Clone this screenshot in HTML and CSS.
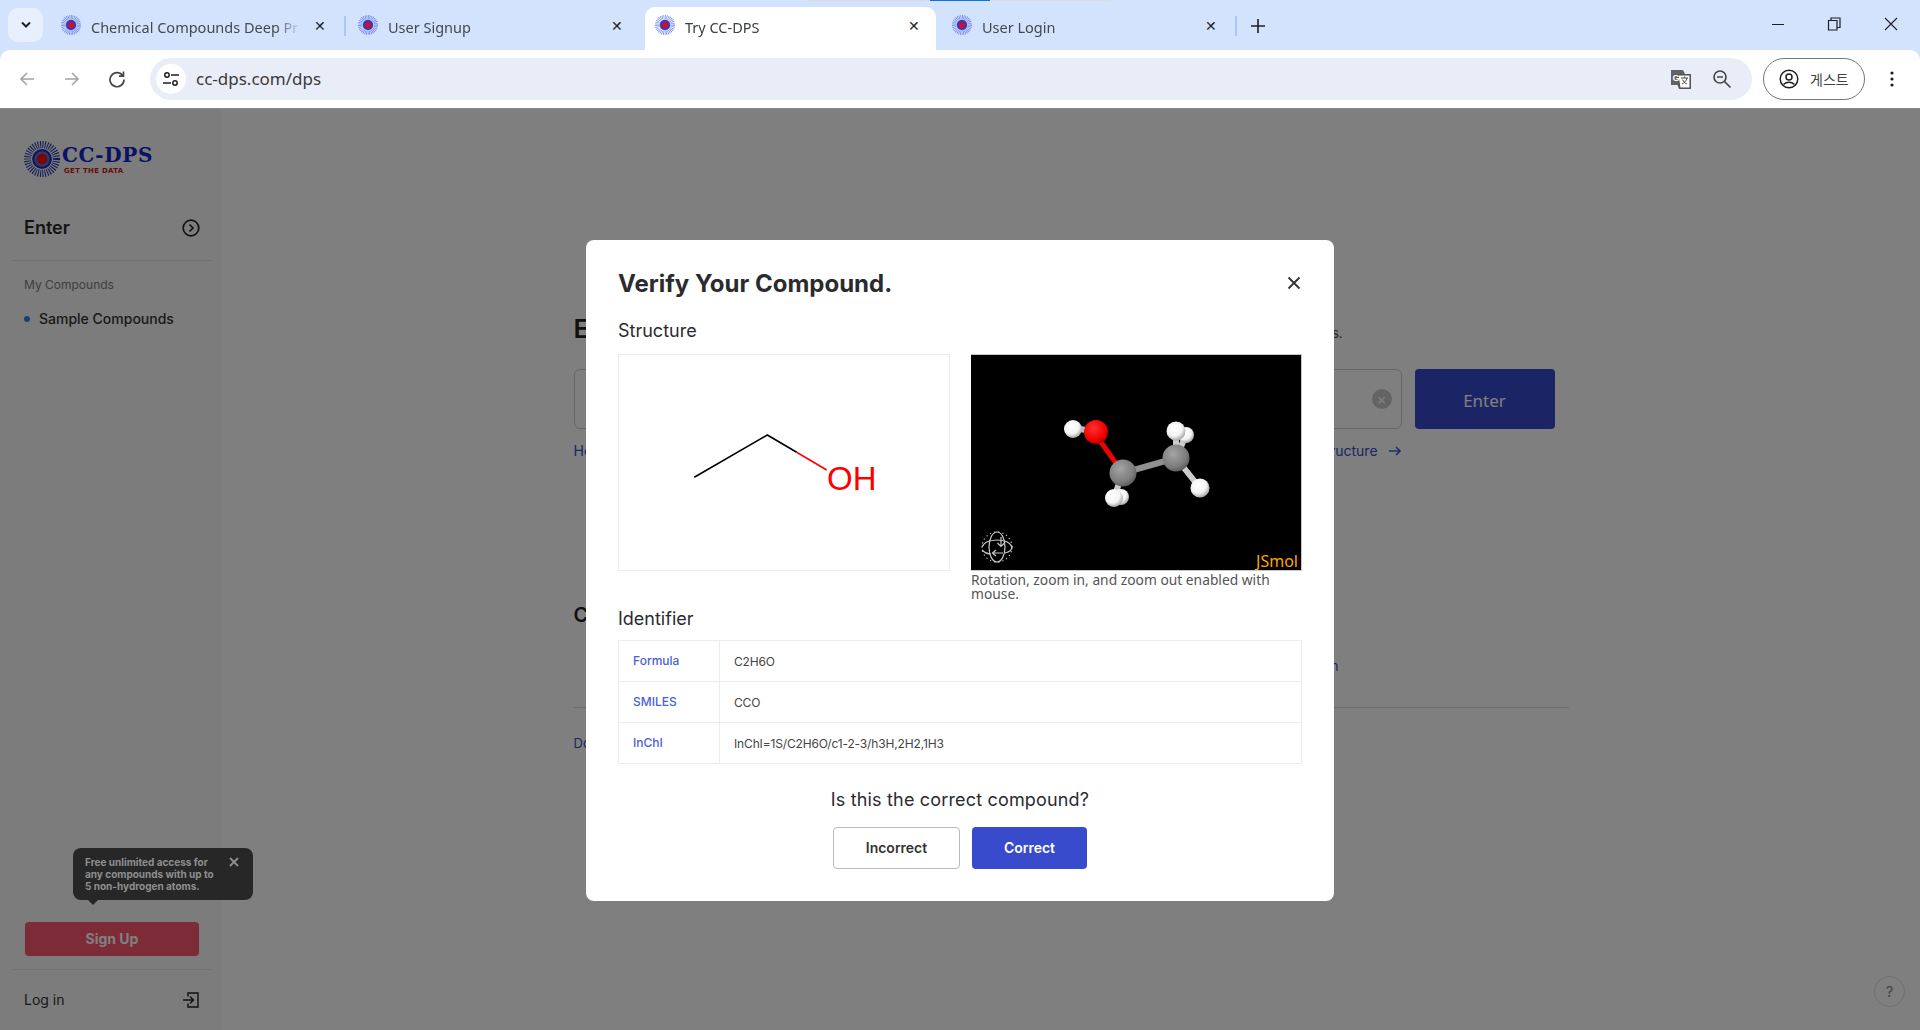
FILE: index.html
```html
<!DOCTYPE html>
<html lang="en">
<head>
    <meta charset="UTF-8">
    <meta name="viewport" content="width=device-width, initial-scale=1.0">
    <title>Try CC-DPS</title>
    <link rel="stylesheet" href="styles.css">
</head>
<body>
    <svg class="defs" width="0" height="0">
        <defs>
            <symbol id="sun" viewBox="0 0 40 40">
                <circle cx="20" cy="20" r="16" fill="none" stroke="#6f80e8" stroke-width="8" stroke-dasharray="1.400 1.600"/>
                <circle cx="20" cy="20" r="11.500" fill="#8d9bec"/>
                <circle cx="20" cy="20" r="10" fill="#2a3ab8"/>
                <circle cx="20" cy="20" r="6.500" fill="#c4103a"/>
            </symbol>
            <radialGradient id="white" cx="40%" cy="35%" r="70%">
                <stop offset="0" stop-color="#fff"/><stop offset=".6" stop-color="#f4f4f4"/><stop offset="1" stop-color="#9a9a9a"/>
            </radialGradient>
            <radialGradient id="grey" cx="40%" cy="35%" r="70%">
                <stop offset="0" stop-color="#a4a4a4"/><stop offset=".7" stop-color="#7c7c7c"/><stop offset="1" stop-color="#555"/>
            </radialGradient>
            <radialGradient id="red" cx="40%" cy="35%" r="70%">
                <stop offset="0" stop-color="#ff3030"/><stop offset=".7" stop-color="#f00000"/><stop offset="1" stop-color="#a00000"/>
            </radialGradient>
        </defs>
    </svg>

    <div class="browser">
        <div class="share-bar"><span class="share-on"></span></div>
        <div class="tabstrip">
            <button class="tab-list">
                <svg width="12" height="8" viewBox="0 0 12 8"><path d="M2 1.500l4 4 4-4" fill="none" stroke="#1f1f1f" stroke-width="2"/></svg>
            </button>
            <div class="tab">
                <svg class="favicon"><use href="#sun"/></svg>
                <span class="tab-title">Chemical Compounds Deep Pr</span>
                <span class="tab-x">✕</span>
            </div>
            <i class="tab-sep"></i>
            <div class="tab">
                <svg class="favicon"><use href="#sun"/></svg>
                <span class="tab-title">User Signup</span>
                <span class="tab-x">✕</span>
            </div>
            <i class="tab-sep hidden"></i>
            <div class="tab active">
                <svg class="favicon"><use href="#sun"/></svg>
                <span class="tab-title">Try CC-DPS</span>
                <span class="tab-x">✕</span>
            </div>
            <i class="tab-sep hidden"></i>
            <div class="tab">
                <svg class="favicon"><use href="#sun"/></svg>
                <span class="tab-title">User Login</span>
                <span class="tab-x">✕</span>
            </div>
            <i class="tab-sep"></i>
            <svg class="new-tab" width="14" height="14" viewBox="0 0 14 14"><path d="M7 0v14M0 7h14" stroke="#1f1f1f" stroke-width="1.600"/></svg>
            <div class="window-btns">
                <svg width="12" height="12" viewBox="0 0 12 12"><path d="M0 6.500h12" stroke="#1f1f1f"/></svg>
                <svg width="14" height="14" viewBox="0 0 14 14"><path d="M4 3V1h9v9.500h-3M1.500 3.500h8.500v9.500H1.500z" fill="none" stroke="#1f1f1f" stroke-width="1.200"/></svg>
                <svg width="14" height="14" viewBox="0 0 14 14"><path d="M1 1l12 12M13 1L1 13" stroke="#1f1f1f" stroke-width="1.100"/></svg>
            </div>
        </div>
        <div class="toolbar">
            <svg class="nav-btn" width="18" height="18" viewBox="0 0 18 18"><path d="M16 9H3M9 3L3 9l6 6" fill="none" stroke="#a3a5a8" stroke-width="1.600"/></svg>
            <svg class="nav-btn" width="18" height="18" viewBox="0 0 18 18"><path d="M2 9h13M9 3l6 6-6 6" fill="none" stroke="#a3a5a8" stroke-width="1.600"/></svg>
            <svg class="nav-btn" width="18" height="18" viewBox="0 0 18 18"><path d="M14.600 5.500A7 7 0 1 0 16 9.500M15.500 1.500v4.600h-4.600" fill="none" stroke="#474747" stroke-width="1.700"/></svg>
            <div class="omnibox">
                <span class="site-info">
                    <svg width="16" height="16" viewBox="0 0 16 16"><circle cx="4" cy="4" r="2.200" fill="none" stroke="#1f1f1f" stroke-width="1.500"/><circle cx="12" cy="12" r="2.200" fill="none" stroke="#1f1f1f" stroke-width="1.500"/><path d="M8 4h8M0 12h8" stroke="#1f1f1f" stroke-width="1.500"/></svg>
                </span>
                <span class="url">cc-dps.com/dps</span>
                <svg class="omni-icon" width="22" height="22" viewBox="0 0 22 22"><path d="M1 2h12l2 4h6v15H9l-1.500-4H1z" fill="#5f6368"/><path d="M8 7h12v13H10z" fill="#fff" stroke="#474747"/><text x="2.500" y="13" class="g-letter">G</text><path d="M11 10h7M14.500 8.500V10M17 10c-.5 3-3 5-5 6M12.500 11.500c.8 2 2.600 3.700 4.500 4.500" fill="none" stroke="#474747"/></svg>
                <svg class="omni-icon" width="20" height="20" viewBox="0 0 20 20"><circle cx="8" cy="8" r="6" fill="none" stroke="#474747" stroke-width="1.700"/><path d="M12.500 12.500L18.500 18.500" stroke="#474747" stroke-width="1.700"/><path d="M5 8h6" stroke="#474747" stroke-width="1.500"/></svg>
            </div>
            <div class="profile">
                <svg width="20" height="20" viewBox="0 0 20 20"><circle cx="10" cy="10" r="8.800" fill="none" stroke="#1f1f1f" stroke-width="1.500"/><circle cx="10" cy="8" r="3" fill="none" stroke="#1f1f1f" stroke-width="1.500"/><path d="M4.500 15.500c3-3 8-3 11 0" fill="none" stroke="#1f1f1f" stroke-width="1.500"/></svg>
                <span>게스트</span>
            </div>
            <svg class="kebab" width="4" height="16" viewBox="0 0 4 16"><circle cx="2" cy="2" r="1.600" fill="#1f1f1f"/><circle cx="2" cy="8" r="1.600" fill="#1f1f1f"/><circle cx="2" cy="14" r="1.600" fill="#1f1f1f"/></svg>
        </div>
    </div>

    <div class="page">
        <aside class="sidebar">
            <div class="logo">
                <svg class="logo-mark" viewBox="0 0 40 40">
                    <circle cx="20" cy="20" r="16" fill="none" stroke="#1c2fb0" stroke-width="8" stroke-dasharray="1.100 1.500"/>
                    <circle cx="20" cy="20" r="11" fill="#1c2fb0"/>
                    <circle cx="20" cy="20" r="8.500" fill="#6070e0"/>
                    <circle cx="20" cy="20" r="6" fill="#ee1010"/>
                </svg>
                <div class="logo-text">
                    <span class="logo-name">CC-DPS</span>
                    <span class="logo-tag">GET THE DATA</span>
                </div>
            </div>
            <div class="side-row enter-row">
                <span>Enter</span>
                <svg width="18" height="18" viewBox="0 0 18 18"><circle cx="9" cy="9" r="7.800" fill="none" stroke="#222" stroke-width="1.700"/><path d="M7.500 5.500L11 9l-3.500 3.500" fill="none" stroke="#222" stroke-width="1.700"/></svg>
            </div>
            <div class="side-section">
                <div class="side-label">My Compounds</div>
                <div class="side-item">Sample Compounds</div>
            </div>
            <div class="side-foot">
                <button class="signup">Sign Up</button>
                <div class="side-row login-row">
                    <span>Log in</span>
                    <svg width="16" height="16" viewBox="0 0 16 16"><path d="M5 4.500V1h10v14H5v-3.500M0 8h10.500M7 4.500L10.500 8 7 11.500" fill="none" stroke="#222" stroke-width="1.400"/></svg>
                </div>
            </div>
        </aside>

        <main class="main">
            <div class="main-inner">
                <div class="search-head">
                    <h2>Enter Compound</h2>
                    <span class="note">Search by name, SMILES or InChI of the compounds.</span>
                </div>
                <div class="search-row">
                    <div class="search-input">
                        <span class="clear-btn">×</span>
                    </div>
                    <button class="enter-btn">Enter</button>
                </div>
                <div class="search-links">
                    <a>How to enter a compound</a>
                    <a class="arrow-link">Draw structure
                        <svg width="12" height="10" viewBox="0 0 12 10"><path d="M0 5h11M7 1l4 4-4 4" fill="none" stroke="#4a5ad8" stroke-width="1.600"/></svg>
                    </a>
                </div>
                <div class="sample-head">
                    <h2>Compounds</h2>
                </div>
                <div class="sample-row"><a>View sample compound selection</a></div>
                <hr class="main-rule">
                <a class="doc-link">Docs</a>
            </div>
        </main>

        <div class="overlay"></div>

        <div class="tooltip">
            <p>Free unlimited access for any compounds with up to 5 non-hydrogen atoms.</p>
            <svg width="10" height="10" viewBox="0 0 10 10"><path d="M1 1l8 8M9 1L1 9" stroke="#8f8f8f" stroke-width="1.800"/></svg>
        </div>

        <div class="help">?</div>

        <section class="modal">
            <div class="modal-head">
                <h1>Verify Your Compound.</h1>
                <svg width="14" height="14" viewBox="0 0 14 14"><path d="M1.500 1.500l11 11M12.500 1.500l-11 11" stroke="#333" stroke-width="1.800"/></svg>
            </div>
            <h3>Structure</h3>
            <div class="structure">
                <div class="panel-2d">
                    <svg width="330" height="215" viewBox="0 0 330 215">
                        <path d="M75.300 122.300L148.300 80L177.700 97.300" fill="none" stroke="#000" stroke-width="1.600"/>
                        <path d="M177.700 97.300L207.700 115" fill="none" stroke="#f00" stroke-width="1.600"/>
                        <text x="208" y="135" class="oh">OH</text>
                    </svg>
                </div>
                <div class="panel-3d">
                    <div class="jsmol">
                        <svg width="330" height="216" viewBox="0 0 330 216">
                            <path d="M122 76L102 73" stroke="#bbb" stroke-width="6"/>
                            <path d="M122 76L152 118" stroke="#e00" stroke-width="5"/>
                            <path d="M152 118L205 103" stroke="#909090" stroke-width="6"/>
                            <path d="M152 118L143 142M205 103L205 76M205 103L229 133M205 103L215 80" stroke="#ccc" stroke-width="6"/>
                            <circle cx="215" cy="80" r="8" fill="url(#white)"/>
                            <circle cx="205" cy="76" r="9.500" fill="url(#white)"/>
                            <circle cx="205" cy="103" r="13.500" fill="url(#grey)"/>
                            <circle cx="229" cy="133" r="9.500" fill="url(#white)"/>
                            <circle cx="150" cy="142" r="8" fill="url(#white)"/>
                            <circle cx="143" cy="143" r="9" fill="url(#white)"/>
                            <circle cx="152" cy="118" r="13.500" fill="url(#grey)"/>
                            <circle cx="125" cy="77" r="12" fill="url(#red)"/>
                            <circle cx="102" cy="74" r="9" fill="url(#white)"/>
                            <g fill="none" stroke="#c8c8c8" stroke-width="1.200">
                                <circle cx="26" cy="192" r="15" stroke-dasharray="1.200 3"/>
                                <ellipse cx="26" cy="192" rx="8" ry="15"/>
                                <path d="M11 192c2-5 9-7 15-7s13 2 15 7c0 3-3 5-7 6M20 199c-4 0-7-2-9-4"/>
                                <path d="M30 182v9M26.500 188l3.500 3.500 3.500-3.500M32 198h-10M25 195l-3.500 3 3.500 3"/>
                            </g>
                        </svg>
                        <span class="jsmol-mark">JSmol</span>
                    </div>
                    <p class="caption">Rotation, zoom in, and zoom out enabled with mouse.</p>
                </div>
            </div>
            <h3 class="id-title">Identifier</h3>
            <div class="id-table">
                <div class="id-row"><span class="id-key">Formula</span><span class="id-val">C2H6O</span></div>
                <div class="id-row"><span class="id-key">SMILES</span><span class="id-val">CCO</span></div>
                <div class="id-row"><span class="id-key">InChI</span><span class="id-val">InChI=1S/C2H6O/c1-2-3/h3H,2H2,1H3</span></div>
            </div>
            <p class="question">Is this the correct compound?</p>
            <div class="actions">
                <button class="btn-outline">Incorrect</button>
                <button class="btn-primary">Correct</button>
            </div>
        </section>
    </div>
</body>
</html>
```

FILE: styles.css
```css
* {
    box-sizing: border-box;
}

html, body {
    height: 100%;
    margin: 0;
}

body {
    font-family: Inter, "Noto Sans CJK KR", sans-serif;
    display: flex;
    flex-direction: column;
    overflow: hidden;
    background: #fff;
}

button {
    font-family: inherit;
}

.defs {
    position: absolute;
}

/* browser chrome */
.browser {
    position: relative;
    background: #d3e3fd;
    flex: none;
}

.share-bar {
    position: absolute;
    top: 0;
    left: 808px;
    width: 302px;
    height: 1px;
    background: #dcdcdc;
}

.share-on {
    display: block;
    margin-left: 122px;
    width: 60px;
    height: 1px;
    background: #0a74da;
}

.tabstrip {
    height: 50px;
    display: flex;
    align-items: flex-end;
    padding-left: 8px;
}

.tab-list {
    width: 35px;
    height: 34px;
    margin: 0 8px 8px 0;
    border: none;
    border-radius: 10px;
    background: #e8f0fe;
    display: flex;
    align-items: center;
    justify-content: center;
    padding: 0;
}

.tab {
    width: 291px;
    height: 43px;
    display: flex;
    align-items: center;
    padding: 0 16px 7px 10px;
    border-radius: 10px 10px 0 0;
    font-family: "Noto Sans", "Open Sans", sans-serif;
    font-size: 14.500px;
    color: #45494e;
}

.tab.active {
    background: #fff;
    color: #3c4043;
}

.favicon {
    width: 20px;
    height: 20px;
    margin-right: 10px;
    flex: none;
}

.tab-title {
    flex: 1;
    margin-top: 4px;
    overflow: hidden;
    white-space: nowrap;
    -webkit-mask-image: linear-gradient(to right, #000 88%, transparent);
    mask-image: linear-gradient(to right, #000 88%, transparent);
}

.tab-x {
    font-size: 14px;
    color: #1f1f1f;
    margin-left: 13px;
}

.tab-sep {
    width: 2px;
    height: 20px;
    margin: 0 2px 14px;
    background: #a8c7fa;
}

.tab-sep.hidden {
    visibility: hidden;
}

.new-tab {
    margin: 0 0 17px 12px;
}

.window-btns {
    margin: 0 0 19px auto;
    display: flex;
    align-items: center;
    gap: 43px;
    padding-right: 22px;
}

.toolbar {
    height: 59px;
    background: #fff;
    border-radius: 10px 10px 0 0;
    border-bottom: 1px solid #8a8a8a;
    display: flex;
    align-items: center;
    padding: 0 0 1px 18px;
}

.nav-btn {
    margin-right: 27px;
    flex: none;
}

.omnibox {
    width: 1602px;
    height: 42px;
    margin-left: -3px;
    border-radius: 21px;
    background: #e9edf8;
    display: flex;
    align-items: center;
    padding-left: 6px;
}

.site-info {
    width: 30px;
    height: 30px;
    border-radius: 50%;
    background: #fff;
    display: flex;
    align-items: center;
    justify-content: center;
}

.url {
    flex: 1;
    font-family: "Noto Sans", "Open Sans", sans-serif;
    font-size: 17px;
    color: #3a3a3a;
    margin-left: 10px;
}

.omni-icon {
    margin-right: 20px;
}

.g-letter {
    font-family: "Liberation Sans", sans-serif;
    font-weight: 700;
    font-size: 9px;
    fill: #fff;
}

.profile {
    width: 102px;
    height: 42px;
    margin-left: 11px;
    border: 1px solid #747775;
    border-radius: 21px;
    display: flex;
    align-items: center;
    gap: 11px;
    padding-left: 15px;
    font-family: "Noto Sans CJK KR", sans-serif;
    font-size: 14px;
    color: #444;
}

.kebab {
    margin-left: 25px;
}

/* page under the dialog */
.page {
    position: relative;
    flex: 1;
    display: flex;
    min-height: 0;
}

.sidebar {
    width: 222px;
    flex: none;
    background: #f8f8f8;
    padding: 0 10px 0 12px;
    display: flex;
    flex-direction: column;
}

.logo {
    height: 43px;
    margin: 28px 0 0 12px;
    display: flex;
    align-items: center;
    gap: 2px;
}

.logo-mark {
    width: 36px;
    height: 42px;
    flex: none;
}

.logo-text {
    display: flex;
    flex-direction: column;
}

.logo-name {
    font-family: "DejaVu Serif", "Liberation Serif", serif;
    font-weight: 700;
    font-size: 20px;
    line-height: 24px;
    color: #1224c8;
    letter-spacing: .7px;
}

.logo-tag {
    font-family: "DejaVu Sans", sans-serif;
    font-weight: 700;
    font-size: 7px;
    line-height: 8px;
    letter-spacing: .3px;
    color: #d01616;
    margin-left: 2px;
}

.side-row {
    display: flex;
    align-items: center;
    justify-content: space-between;
    padding: 0 12px;
}

.enter-row {
    height: 52px;
    margin-top: 29px;
    padding-bottom: 14px;
    font-size: 18px;
    font-weight: 600;
    color: #2a2a2a;
    border-bottom: 1px solid #e4e4e4;
}

.side-section {
    padding: 0 12px;
}

.side-label {
    margin-top: 16px;
    font-size: 12px;
    line-height: 16px;
    color: #808080;
}

.side-item {
    position: relative;
    margin-top: 17px;
    padding-left: 15px;
    font-size: 14px;
    line-height: 17px;
    font-weight: 500;
    color: #333;
}

.side-item::before {
    content: "";
    position: absolute;
    left: 0;
    top: 6px;
    width: 6px;
    height: 6px;
    border-radius: 50%;
    background: #3f7fd8;
}

.side-foot {
    margin-top: auto;
}

.signup {
    display: block;
    width: 174px;
    height: 34px;
    margin: 0 0 13px 13px;
    padding: 0 0 2px;
    border: none;
    border-radius: 4px;
    background: #fc5670;
    color: #fff;
    font-size: 14px;
    font-weight: 700;
}

.login-row {
    height: 61px;
    border-top: 1px solid #e4e4e4;
    font-size: 14px;
    color: #333;
    padding-right: 13px;
    padding-bottom: 1px;
}

.main {
    flex: 1;
    min-width: 0;
    padding-top: 204px;
}

.main-inner {
    width: 995px;
    margin: 0 auto;
}

.main h2 {
    margin: 0;
    font-size: 26px;
    line-height: 30px;
    font-weight: 600;
    color: #222;
}

.search-head {
    width: 769px;
    display: flex;
    justify-content: space-between;
    align-items: center;
    height: 32px;
}

.note {
    font-size: 13px;
    color: #555;
    position: relative;
    top: 4px;
}

.search-row {
    margin-top: 24px;
    display: flex;
    gap: 13px;
}

.search-input {
    width: 828px;
    height: 60px;
    border: 1px solid #ccc;
    border-radius: 6px;
    display: flex;
    align-items: center;
    justify-content: flex-end;
    padding-right: 9px;
}

.clear-btn {
    width: 20px;
    height: 20px;
    border-radius: 50%;
    background: #c8c8c8;
    color: #fff;
    font-size: 16px;
    line-height: 20px;
    text-align: center;
}

.enter-btn {
    width: 140px;
    height: 60px;
    padding: 2px 0 0;
    border: none;
    border-radius: 4px;
    background: #364acc;
    color: #fff;
    font-family: "Noto Sans", sans-serif;
    font-size: 17px;
}

.search-links {
    width: 827px;
    margin-top: 13px;
    display: flex;
    justify-content: space-between;
    font-size: 14px;
    line-height: 17px;
    color: #3a4bc8;
}

.arrow-link svg {
    margin-left: 7px;
}

.sample-head {
    margin-top: 141px;
}

.sample-head h2 {
    font-size: 20px;
}

.sample-row {
    width: 765px;
    margin-top: 28px;
    text-align: right;
    font-size: 13px;
    line-height: 17px;
    color: #3a4bc8;
}

.main-rule {
    margin: 32px 0 0;
    border: none;
    border-top: 1px solid #ddd;
}

.doc-link {
    display: block;
    margin-top: 27px;
    font-size: 13px;
    line-height: 17px;
    color: #3a4bc8;
}

/* things over the page */
.overlay {
    position: absolute;
    inset: 0;
    background: rgba(0, 0, 0, .5);
}

.tooltip {
    position: absolute;
    left: 73px;
    top: 739px;
    width: 180px;
    height: 52px;
    padding: 8px 28px 0 12px;
    border-radius: 8px;
    background: #272727;
}

.tooltip p {
    margin: 0;
    font-size: 10px;
    line-height: 12px;
    font-weight: 700;
    color: #8f8f8f;
    width: 134px;
}

.tooltip svg {
    position: absolute;
    right: 14px;
    top: 9px;
}

.tooltip::after {
    content: "";
    position: absolute;
    left: 15px;
    bottom: -5px;
    border: 5px solid transparent;
    border-bottom: 0;
    border-top-color: #272727;
}

.help {
    position: absolute;
    left: 1874px;
    top: 867px;
    width: 31px;
    height: 31px;
    border: 1px solid #707070;
    border-radius: 50%;
    color: #444;
    font-size: 15px;
    line-height: 29px;
    text-align: center;
}

.modal {
    position: absolute;
    left: 586px;
    top: 131px;
    width: 748px;
    height: 661px;
    padding: 0 32px;
    background: #fff;
    border-radius: 8px;
    color: #2b2b2f;
}

.modal-head {
    height: 79px;
    padding-top: 7px;
    display: flex;
    align-items: center;
    justify-content: space-between;
}

.modal-head svg {
    margin-right: 1px;
}

.modal h1 {
    margin: 0;
    font-size: 24px;
    font-weight: 700;
    color: #2b2b2f;
}

.modal h3 {
    margin: 0;
    font-size: 18px;
    line-height: 24px;
    font-weight: 400;
}

.structure {
    display: flex;
    gap: 21px;
    margin-top: 11px;
}

.panel-2d {
    width: 332px;
    height: 217px;
    border: 1px solid #ececec;
}

.panel-3d {
    width: 331px;
}

.jsmol {
    position: relative;
    height: 217px;
    background: #000;
    border: 1px solid #c8c8c8;
    border-left: 0;
    overflow: hidden;
}

.jsmol svg {
    display: block;
}

.jsmol-mark {
    position: absolute;
    right: 3px;
    bottom: 0;
    font-family: "Noto Sans", sans-serif;
    font-size: 16px;
    line-height: 18px;
    color: #ffa500;
}

.oh {
    font-family: "Liberation Sans", sans-serif;
    font-size: 33px;
    fill: #f00;
}

.caption {
    margin: 2px 0 0;
    font-family: "Noto Sans", sans-serif;
    font-size: 13.800px;
    line-height: 14px;
    color: #555;
}

.modal .id-title {
    margin-top: 6px;
}

.id-table {
    margin-top: 9px;
    border: 1px solid #ececec;
}

.id-row {
    height: 40px;
    display: flex;
    align-items: center;
    font-size: 12px;
}

.id-row + .id-row {
    height: 41px;
    border-top: 1px solid #ececec;
}

.id-key {
    width: 101px;
    height: 100%;
    display: flex;
    align-items: center;
    padding: 0 0 2px 14px;
    border-right: 1px solid #ececec;
    color: #4a5fd8;
    font-weight: 500;
}

.id-val {
    padding-left: 14px;
    color: #444;
    letter-spacing: -.15px;
}

.question {
    margin: 24px 0 0;
    font-size: 18px;
    line-height: 24px;
    letter-spacing: .17px;
    text-align: center;
}

.actions {
    margin-top: 15px;
    display: flex;
    justify-content: center;
    gap: 12px;
}

.actions button {
    height: 42px;
    padding: 0 0 2px;
    border-radius: 4px;
    font-size: 14px;
    font-weight: 600;
}

.btn-outline {
    width: 127px;
    background: #fff;
    border: 1px solid #bbb;
    color: #333;
}

.btn-primary {
    width: 115px;
    background: #384bcc;
    border: none;
    color: #fff;
}
```
